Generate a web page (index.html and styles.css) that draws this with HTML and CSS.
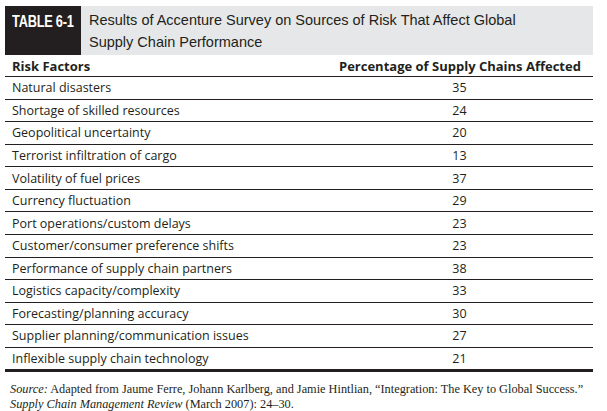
FILE: index.html
```html
<!DOCTYPE html>
<html>
<head>
<meta charset="utf-8">
<link rel="stylesheet" href="styles.css">
</head>
<body>
<div class="figure">
  <div class="caption">
    <div class="label"><span class="label-text">TABLE 6-1</span></div>
    <div class="title">Results of Accenture Survey on Sources of Risk That Affect Global<br>Supply Chain Performance</div>
  </div>
  <div class="table">
    <div class="row head">
      <div class="c1">Risk Factors</div>
      <div class="c2">Percentage of Supply Chains Affected</div>
    </div>
    <div class="row"><div class="c1">Natural disasters</div><div class="c2">35</div></div>
    <div class="row"><div class="c1">Shortage of skilled resources</div><div class="c2">24</div></div>
    <div class="row"><div class="c1">Geopolitical uncertainty</div><div class="c2">20</div></div>
    <div class="row"><div class="c1">Terrorist infiltration of cargo</div><div class="c2">13</div></div>
    <div class="row"><div class="c1">Volatility of fuel prices</div><div class="c2">37</div></div>
    <div class="row"><div class="c1">Currency fluctuation</div><div class="c2">29</div></div>
    <div class="row"><div class="c1">Port operations/custom delays</div><div class="c2">23</div></div>
    <div class="row"><div class="c1">Customer/consumer preference shifts</div><div class="c2">23</div></div>
    <div class="row"><div class="c1">Performance of supply chain partners</div><div class="c2">38</div></div>
    <div class="row"><div class="c1">Logistics capacity/complexity</div><div class="c2">33</div></div>
    <div class="row"><div class="c1">Forecasting/planning accuracy</div><div class="c2">30</div></div>
    <div class="row"><div class="c1">Supplier planning/communication issues</div><div class="c2">27</div></div>
    <div class="row last"><div class="c1">Inflexible supply chain technology</div><div class="c2">21</div></div>
  </div>
  <p class="source"><i>Source:</i> Adapted from Jaume Ferre, Johann Karlberg, and Jamie Hintlian, “Integration: The Key to Global Success.”<br><i>Supply Chain Management Review</i> (March 2007): 24–30.</p>
</div>
</body>
</html>
```

FILE: styles.css
```css
html, body {
  margin: 0;
  padding: 0;
  background: #ffffff;
}
.figure {
  width: 588px;
  margin: 6px 0 0 5px;
  color: #231f20;
}
.caption {
  display: flex;
  height: 49px;
}
.label {
  width: 76px;
  background: #231f20;
  color: #ffffff;
  font-family: "Liberation Sans", sans-serif;
  font-weight: bold;
  font-size: 16px;
  padding: 7px 0 0 7px;
  box-sizing: border-box;
  white-space: nowrap;
  overflow: hidden;
}
.label-text {
  display: inline-block;
  transform: scaleX(0.8);
  transform-origin: left center;
  letter-spacing: -0.3px;
}
.title {
  flex: 1;
  background: #e6e7e8;
  font-family: "Liberation Sans", sans-serif;
  font-size: 14.5px;
  line-height: 22px;
  padding: 3px 0 0 8px;
  color: #231f20;
}
.table {
  font-family: "Open Sans", sans-serif;
  font-size: 12.5px;
}
.row {
  display: grid;
  grid-template-columns: 1fr 254px;
  height: 22.57px;
  box-sizing: border-box;
  border-bottom: 1px solid #231f20;
  align-items: center;
}
.row.head {
  height: 22px;
  font-weight: bold;
  font-size: 13px;
}
.row.last {
  border-bottom: 3px solid #231f20;
  height: 24.57px;
}
.c1 {
  padding-left: 7px;
  white-space: nowrap;
}
.c2 {
  text-align: center;
  padding-right: 13px;
  white-space: nowrap;
}
.head .c2 {
  text-align: right;
}
.source {
  margin: 10px 0 0 5px;
  font-family: "Liberation Serif", serif;
  font-size: 12.3px;
  line-height: 15px;
}
```
